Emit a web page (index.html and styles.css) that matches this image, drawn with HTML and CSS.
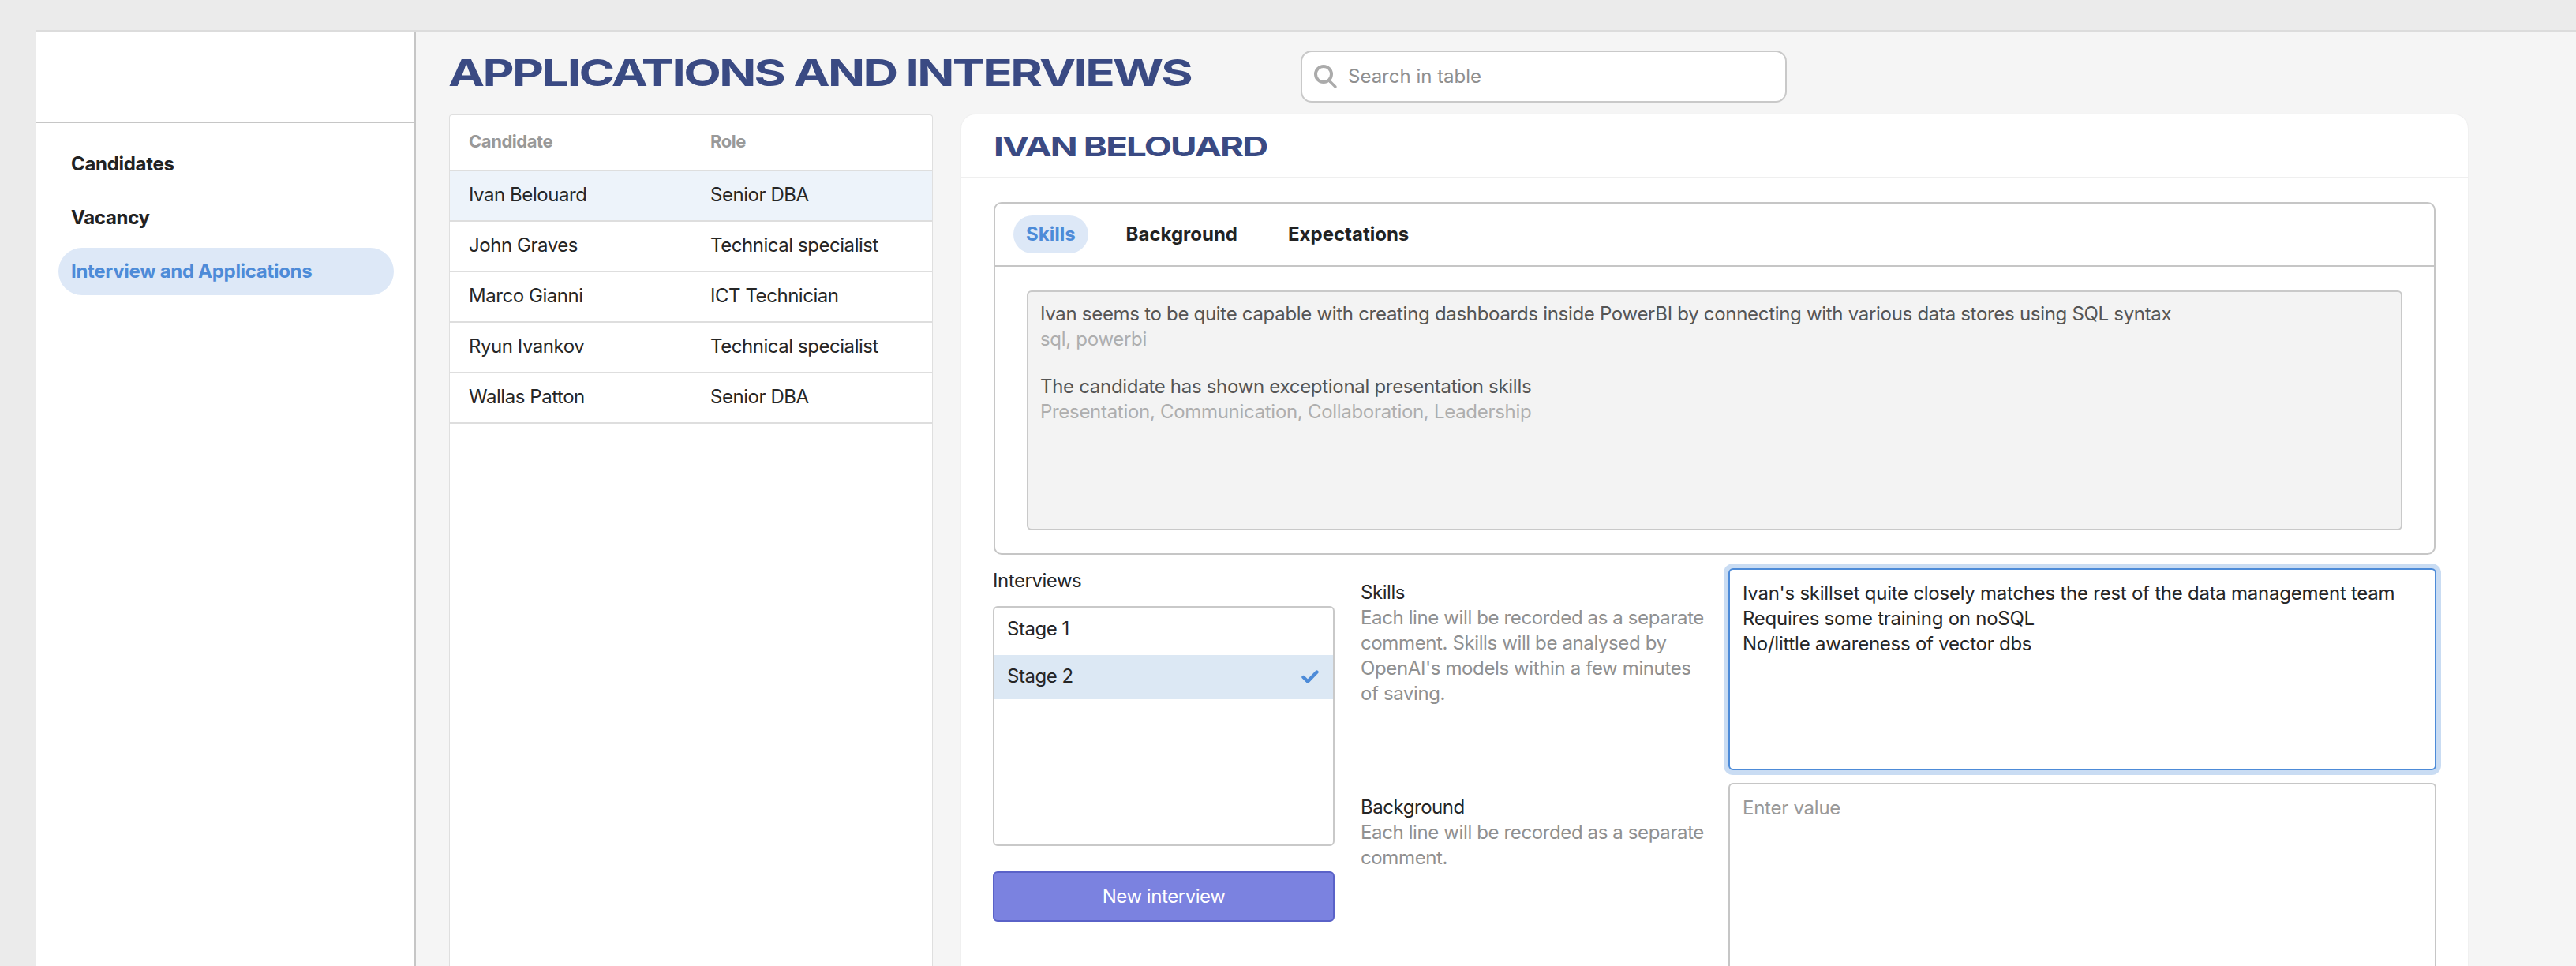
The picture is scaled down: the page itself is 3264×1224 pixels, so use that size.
FILE: index.html
```html
<!DOCTYPE html>
<html lang="en">
<head>
<meta charset="utf-8">
<title>Applications and interviews</title>
<link rel="stylesheet" href="styles.css">
</head>
<body>
<div class="shell">
  <aside class="sidebar">
    <div class="brand"></div>
    <nav class="nav">
      <a class="nav-item">Candidates</a>
      <a class="nav-item">Vacancy</a>
      <a class="nav-item active">Interview and Applications</a>
    </nav>
  </aside>
  <main class="main">
    <header class="topbar">
      <h1 class="page-title">APPLICATIONS AND INTERVIEWS</h1>
      <div class="search">
        <svg class="search-icon" viewBox="0 0 32 32" width="32" height="32"><circle cx="13" cy="13" r="10" fill="none" stroke="#ababab" stroke-width="4"/><path d="M21 22l7 7" stroke="#ababab" stroke-width="3.4" stroke-linecap="round"/></svg>
        <span>Search in table</span>
      </div>
    </header>
    <div class="columns">
      <section class="table-card">
        <div class="row head"><span class="c1">Candidate</span><span>Role</span></div>
        <div class="row selected"><span class="c1">Ivan Belouard</span><span>Senior DBA</span></div>
        <div class="row"><span class="c1">John Graves</span><span>Technical specialist</span></div>
        <div class="row"><span class="c1">Marco Gianni</span><span>ICT Technician</span></div>
        <div class="row"><span class="c1">Ryun Ivankov</span><span>Technical specialist</span></div>
        <div class="row"><span class="c1">Wallas Patton</span><span>Senior DBA</span></div>
      </section>
      <section class="detail">
        <div class="detail-head"><h2 class="detail-title">IVAN BELOUARD</h2></div>
        <div class="detail-body">
          <div class="tabs-box">
            <div class="tabs">
              <span class="tab active">Skills</span>
              <span class="tab">Background</span>
              <span class="tab">Expectations</span>
            </div>
            <div class="tab-panel">
              <div class="readonly">
                <p class="dark">Ivan seems to be quite capable with creating dashboards inside PowerBI by connecting with various data stores using SQL syntax</p>
                <p class="light">sql, powerbi</p>
                <p class="spacer">&nbsp;</p>
                <p class="dark">The candidate has shown exceptional presentation skills</p>
                <p class="light">Presentation, Communication, Collaboration, Leadership</p>
              </div>
            </div>
          </div>
          <div class="lower">
            <div class="interviews">
              <div class="int-label">Interviews</div>
              <div class="list">
                <div class="list-item">Stage 1</div>
                <div class="list-item on">Stage 2
                  <svg class="check" viewBox="0 0 22 17" width="22" height="17"><path d="M2.5 9l5.5 5.5L19.5 2.5" fill="none" stroke="#4d8bd8" stroke-width="4.4" stroke-linecap="round" stroke-linejoin="round"/></svg>
                </div>
              </div>
              <button class="new-btn">New interview</button>
            </div>
            <div class="fields">
              <div class="field">
                <div class="field-text">
                  <div class="field-label">Skills</div>
                  <div class="field-help">Each line will be recorded as a separate comment. Skills will be analysed by OpenAI's models within a few minutes of saving.</div>
                </div>
                <div class="area focus">Ivan's skillset quite closely matches the rest of the data management team<br>Requires some training on noSQL<br>No/little awareness of vector dbs</div>
              </div>
              <div class="field">
                <div class="field-text">
                  <div class="field-label">Background</div>
                  <div class="field-help">Each line will be recorded as a separate comment.</div>
                </div>
                <div class="area placeholder">Enter value</div>
              </div>
            </div>
          </div>
        </div>
      </section>
    </div>
  </main>
</div>
</body>
</html>
```
FILE: styles.css
```css
* { box-sizing: border-box; }
html, body { margin: 0; height: 100%; overflow: hidden; }
body {
  background: #ebebeb;
  font-family: "Inter", "Liberation Sans", sans-serif;
  font-size: 24px;
  letter-spacing: -0.45px;
  line-height: 32px;
  color: #262626;
  padding: 38px 0 0 46px;
}
.shell { display: flex; height: 1186px; overflow: hidden; border-top: 2px solid #dcdcdc; }
.sidebar { width: 481px; flex: none; background: #fff; border-right: 2px solid #c6c6c6; }
.brand { height: 116px; border-bottom: 2px solid #c6c6c6; }
.nav { display: flex; flex-direction: column; gap: 8px; padding: 22px 26px 0 28px; }
.nav-item { height: 60px; display: flex; align-items: center; padding-left: 16px; font-weight: 700; letter-spacing: -0.3px; color: #222; border-radius: 30px; }
.nav-item.active { background: #dde8f7; color: #4d8bd8; }
.main { flex: 1; min-width: 0; background: #f5f5f5; padding: 0 0 0 41px; }
.topbar { height: 105px; display: flex; align-items: flex-start; }
.page-title { margin: 28px 0 0; width: 1080px; flex: none; font-weight: 700; font-size: 47px; letter-spacing: -2px; line-height: 48px; color: #3a4a83; transform: scaleX(1.315); transform-origin: left center; white-space: nowrap; }
.search { margin-top: 24px; width: 616px; height: 66px; display: flex; align-items: center; gap: 12px; padding-left: 14px; background: #fff; border: 2px solid #c9c9c9; border-radius: 14px; color: #8f8f8f; letter-spacing: 0; }
.search-icon { flex: none; }
.columns { display: flex; gap: 36px; margin-left: 1px; align-items: flex-start; }
.table-card { width: 613px; flex: none; height: 1079px; background: #fff; border-radius: 4px 4px 0 0; border: 1px solid #dfdfdf; border-bottom: 0; }
.row { height: 64px; display: flex; align-items: center; padding: 0 0 3px 24px; border-bottom: 2px solid #dedede; }
.row.head { height: 71px; font-weight: 700; font-size: 22px; color: #999; }
.row.selected { background: #edf3fa; }
.c1 { width: 306px; flex: none; }
.detail { width: 1909px; flex: none; height: 1079px; overflow: hidden; background: #fff; border-radius: 18px 18px 0 0; box-shadow: 0 0 2px #e4e4e4; }
.detail-head { height: 81px; border-bottom: 2px solid #efefef; padding: 22px 41px 0; }
.detail-title { margin: 0; width: max-content; font-weight: 700; font-size: 34px; letter-spacing: -1.4px; line-height: 38px; color: #3a4a83; transform: scaleX(1.345); transform-origin: left center; }
.detail-body { padding: 30px 40px 0 40px; }
.tabs-box { height: 447px; margin: 0 1px; border: 2px solid #c6c6c6; border-radius: 10px; }
.tabs { height: 80px; display: flex; align-items: center; gap: 32px; padding-left: 23px; border-bottom: 2px solid #c6c6c6; }
.tab { height: 48px; display: flex; align-items: center; padding: 0 16px; border-radius: 24px; font-weight: 700; letter-spacing: 0; color: #222; }
.tab.active { background: #dde8f7; color: #4d8bd8; }
.tab-panel { padding: 30px 40px 0; }
.readonly { height: 304px; background: #f3f3f3; border: 2px solid #c9c9c9; border-radius: 6px; padding: 12px 15px; letter-spacing: -0.3px; }
.readonly p { margin: 0; }
.readonly .spacer { height: 28px; }
.dark { color: #555; }
.light { color: #aeaeae; }
.lower { display: flex; gap: 33px; padding-top: 17px; }
.interviews { width: 433px; flex: none; }
.int-label { height: 48px; }
.list { height: 304px; display: flex; flex-direction: column; gap: 4px; background: #fff; border: 2px solid #c9c9c9; border-radius: 6px; }
.list-item { height: 56px; display: flex; align-items: center; justify-content: space-between; padding: 0 18px 2px 16px; }
.list-item.on { background: #dce8f4; }
.new-btn { display: block; width: 100%; height: 64px; margin-top: 32px; background: #7b82e0; border: 2px solid #5a62c8; border-radius: 6px; color: #fff; font: inherit; letter-spacing: inherit; }
.fields { flex: 1; display: flex; flex-direction: column; gap: 16px; }
.field { display: flex; gap: 24px; }
.field-text { width: 442px; flex: none; padding-top: 15px; }
.field-help { color: #909090; letter-spacing: -0.38px; }
.area { flex: 1; height: 256px; padding: 14px 16px; background: #fff; border: 2px solid #c6c6c6; border-radius: 6px; letter-spacing: -0.25px; }
.area.focus { border-color: #4d8bd8; box-shadow: 0 0 0 6px #c9dcf3; }
.area.placeholder { color: #999; height: 400px; }
```
